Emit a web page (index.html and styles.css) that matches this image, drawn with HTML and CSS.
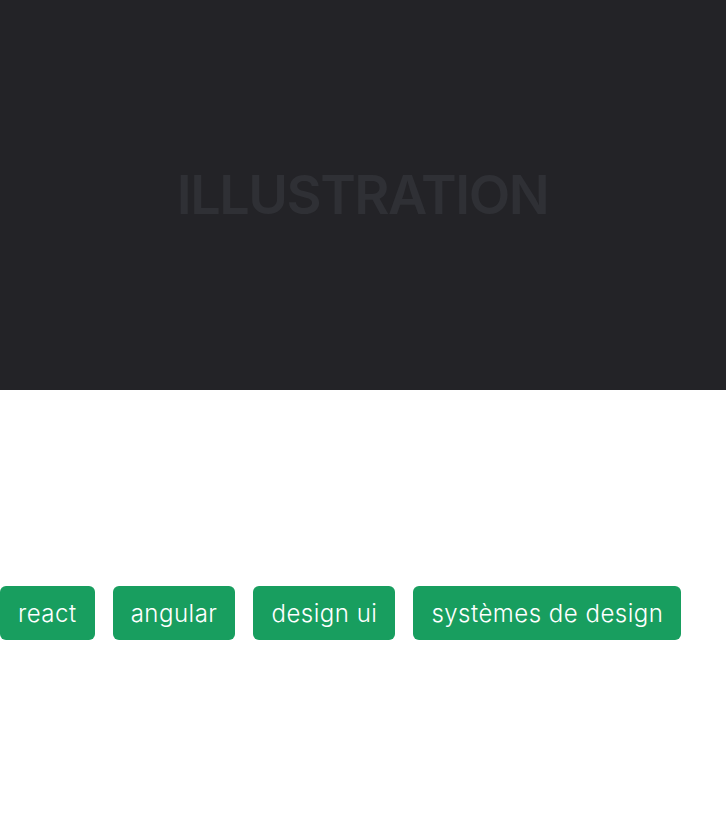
FILE: index.html
```html
<!DOCTYPE html>
<html lang="fr">
<head>
<meta charset="utf-8">
<title>Illustration</title>
<link rel="stylesheet" href="styles.css">
</head>
<body>
  <div class="hero">
    <span class="hero-label">ILLUSTRATION</span>
  </div>
  <div class="tags">
    <span class="tag">react</span>
    <span class="tag">angular</span>
    <span class="tag">design ui</span>
    <span class="tag">systèmes de design</span>
  </div>
</body>
</html>
```
FILE: styles.css
```css
html, body {
  margin: 0;
  padding: 0;
  background: #ffffff;
}
body {
  font-family: "Inter", "Liberation Sans", sans-serif;
  width: 726px;
}
.hero {
  height: 390px;
  background: #232327;
  display: flex;
  align-items: center;
  justify-content: center;
}
.hero-label {
  color: #2f3035;
  font-size: 54px;
  font-weight: 600;
  letter-spacing: -1.5px;
  line-height: 1;
  padding-right: 1px;
}
.tags {
  display: flex;
  gap: 18px;
  margin-top: 196px;
}
.tag {
  background: #189e5f;
  color: #ffffff;
  height: 54px;
  padding: 2px 18px 0;
  box-sizing: border-box;
  border-radius: 6px;
  display: flex;
  align-items: center;
  font-size: 24px;
  font-weight: 300;
  letter-spacing: 0.5px;
  line-height: 1;
}
```
